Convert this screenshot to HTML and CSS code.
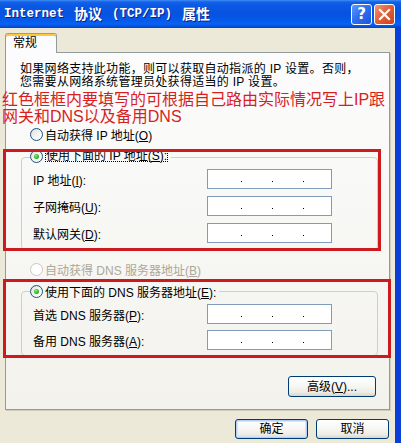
FILE: index.html
```html
<!DOCTYPE html>
<html lang="zh-CN">
<head>
<meta charset="utf-8">
<title>Internet 协议 (TCP/IP) 属性</title>
<link rel="stylesheet" href="styles.css">
</head>
<body>
<div class="window">
  <div class="titlebar">
    <div class="title">
      <span class="lat">Internet</span><span>协议</span><span class="lat">(TCP/IP)</span><span>属性</span>
    </div>
    <div class="tb-buttons">
      <div class="tb-btn help">?</div>
      <div class="tb-btn close">
        <svg width="13" height="13" viewBox="0 0 13 13"><path d="M2 2 L11 11 M11 2 L2 11" stroke="#fff" stroke-width="2.2" stroke-linecap="square" fill="none"/></svg>
      </div>
    </div>
  </div>
  <div class="client">
    <div class="tabs"><div class="tab">常规</div></div>
    <div class="panel">
      <p class="intro">如果网络支持此功能，则可以获取自动指派的 IP 设置。否则，<br>您需要从网络系统管理员处获得适当的 IP 设置。</p>
      <p class="note">红色框框内要填写的可根据自己路由实际情况写上IP跟<br>网关和DNS以及备用DNS</p>
      <div class="option"><span class="radio"></span><span>自动获得 IP 地址(<u>O</u>)</span></div>
      <div class="group g1">
        <div class="legend"><span class="radio on"></span><span class="focus">使用下面的 IP 地址(<u>S</u>):</span></div>
        <div class="fields">
          <div class="field"><span class="label">IP 地址(<u>I</u>):</span><span class="ip"><i></i><i></i><i></i></span></div>
          <div class="field"><span class="label">子网掩码(<u>U</u>):</span><span class="ip"><i></i><i></i><i></i></span></div>
          <div class="field"><span class="label">默认网关(<u>D</u>):</span><span class="ip"><i></i><i></i><i></i></span></div>
        </div>
      </div>
      <div class="option disabled"><span class="radio off"></span><span>自动获得 DNS 服务器地址(<u>B</u>)</span></div>
      <div class="group g2">
        <div class="legend"><span class="radio on"></span><span class="ltext">使用下面的 DNS 服务器地址(<u>E</u>):</span></div>
        <div class="fields">
          <div class="field"><span class="label">首选 DNS 服务器(<u>P</u>):</span><span class="ip"><i></i><i></i><i></i></span></div>
          <div class="field"><span class="label">备用 DNS 服务器(<u>A</u>):</span><span class="ip"><i></i><i></i><i></i></span></div>
        </div>
      </div>
      <div class="btn adv">高级(<u>V</u>)...</div>
    </div>
    <div class="footer">
      <div class="btn default">确定</div>
      <div class="btn">取消</div>
    </div>
  </div>
  <div class="mark m1"></div>
  <div class="mark m2"></div>
</div>
</body>
</html>
```
FILE: styles.css
```css
html, body {
  margin: 0;
  padding: 0;
}
body {
  width: 401px;
  height: 443px;
  overflow: hidden;
  font-family: "Liberation Sans", "Noto Sans CJK SC", sans-serif;
  font-size: 12px;
  color: #000;
}
p { margin: 0; }

.window {
  position: relative;
  width: 401px;
  height: 443px;
  display: flex;
  flex-direction: column;
  background: #ECE9D8;
}

/* title bar */
.titlebar {
  height: 28px;
  flex: none;
  box-sizing: border-box;
  display: flex;
  align-items: center;
  justify-content: space-between;
  padding: 0 6px 0 4px;
  background: linear-gradient(180deg, #3F8CF3 0, #1462E8 2px, #0A58E4 6px, #0553E0 14px, #0659EA 20px, #0762F2 24px, #0553DE 26px, #0441C9 28px);
}
.title {
  display: flex;
  gap: 10px;
  color: #fff;
  font-weight: bold;
  font-size: 14px;
  line-height: 16px;
  text-shadow: 1px 1px 0 #0A1E8A;
  white-space: nowrap;
}
.title .lat {
  font-family: "Liberation Mono", monospace;
  font-size: 12.5px;
}
.tb-buttons {
  display: flex;
  gap: 2px;
}
.tb-btn {
  width: 21px;
  height: 21px;
  box-sizing: border-box;
  border: 1px solid #fff;
  border-radius: 3px;
  display: flex;
  align-items: center;
  justify-content: center;
  color: #fff;
}
.help {
  background: linear-gradient(135deg, #5E9BFB 0%, #2E6FF0 45%, #1A55DB 100%);
  font-family: "DejaVu Sans", sans-serif;
  font-weight: bold;
  font-size: 15px;
  line-height: 19px;
}
.close {
  background: linear-gradient(135deg, #F09A7A 0%, #E2603A 45%, #C9431E 100%);
}

/* client area */
.client {
  flex: 1;
  border-right: 6px solid #0B3DD8;
  padding: 5px 6px 0 5px;
  display: flex;
  flex-direction: column;
}
.tabs {
  height: 19px;
  display: flex;
  position: relative;
  z-index: 1;
}
.tab {
  width: 52px;
  height: 20px;
  box-sizing: border-box;
  border: 1px solid #919B9C;
  border-top: 1px solid #E68B2C;
  border-bottom: none;
  border-radius: 3px 3px 0 0;
  box-shadow: inset 0 2px 0 #FFC73C;
  background: #FCFCFE;
  padding: 3px 0 0 7px;
  line-height: 13px;
}
.panel {
  width: 385px;
  height: 358px;
  box-sizing: border-box;
  border: 1px solid #919B9C;
  background: linear-gradient(180deg, #FCFCFD 0%, #F7F7F4 50%, #F3F2ED 100%);
  box-shadow: 1px 1px 0 #D0CDBE;
  display: flex;
  flex-direction: column;
}
.intro {
  margin: 10px 0 0 14px;
  line-height: 13px;
  letter-spacing: 0.3px;
  white-space: nowrap;
}
.note {
  margin: 3px 0 0 -4px;
  font-size: 16px;
  line-height: 16.5px;
  color: #D81E1E;
  white-space: nowrap;
}
.option {
  display: flex;
  align-items: center;
  height: 14px;
  margin: 2px 0 0 24px;
  white-space: nowrap;
}
.option .radio { margin-right: 2px; }
.option.disabled {
  margin-top: 12px;
  color: #ACA899;
}

.radio {
  position: relative;
  flex: none;
  width: 13px;
  height: 13px;
  box-sizing: border-box;
  border-radius: 50%;
  border: 1px solid #1C5180;
  background: linear-gradient(135deg, #DCDCD7 0%, #F3F3F0 50%, #FFFFFF 100%);
}
.radio.on::after {
  content: "";
  position: absolute;
  left: 3px;
  top: 3px;
  width: 5px;
  height: 5px;
  border-radius: 50%;
  background: radial-gradient(circle at 40% 35%, #7EEA79 0%, #2FB22B 60%, #1F8E1C 100%);
}
.radio.off {
  border-color: #CAC8BB;
  background: #FFFFFF;
}

.group {
  border: 1px solid #D0D0BF;
  border-radius: 4px;
  display: flex;
  flex-direction: column;
}
.g1 {
  margin: 16px 11px 0 15px;
  padding-bottom: 6px;
}
.g2 {
  margin: 15px 11px 0 15px;
  padding-bottom: 5px;
}
.legend {
  align-self: flex-start;
  display: flex;
  align-items: center;
  height: 14px;
  margin-left: 8px;
  padding-right: 3px;
  white-space: nowrap;
}
.g1 .legend {
  margin-top: -9px;
  background: #F9F9F7;
}
.g2 .legend {
  margin-top: -8px;
  background: #F6F6F3;
}
.legend .radio { margin-right: 2px; }
.focus {
  outline: 1px dotted #000;
  outline-offset: -1px;
  padding: 0 1px;
  line-height: 12px;
}
.fields {
  display: flex;
  flex-direction: column;
  margin-top: 6px;
  padding-left: 11px;
}
.g1 .fields { gap: 7px; }
.g2 .fields { gap: 6px; }
.field {
  display: flex;
  align-items: center;
  height: 20px;
}
.label {
  width: 174px;
  white-space: nowrap;
}
.ip {
  display: flex;
  gap: 30px;
  width: 125px;
  height: 20px;
  box-sizing: border-box;
  border: 1px solid #7F9DB9;
  background: #FFFFFF;
  padding-left: 33px;
}
.ip i {
  width: 1px;
  height: 1px;
  margin-top: 11px;
  background: #000;
}

/* buttons */
.btn {
  box-sizing: border-box;
  height: 20px;
  border: 1px solid #003C74;
  border-radius: 3px;
  background: linear-gradient(180deg, #FFFFFF 0%, #F7F7F4 45%, #EDECE6 80%, #D8D5C9 100%);
  display: flex;
  align-items: center;
  justify-content: center;
  line-height: 14px;
  white-space: nowrap;
}
.adv {
  align-self: flex-end;
  width: 88px;
  height: 21px;
  margin: 20px 13px 0 0;
}
.footer {
  display: flex;
  justify-content: flex-end;
  gap: 8px;
  margin-top: 9px;
}
.footer .btn {
  width: 73px;
}
.btn.default {
  box-shadow: inset 0 0 0 1px #B7CEF5, inset 0 0 0 2px #D6E3FA;
}

/* red annotation boxes */
.mark {
  position: absolute;
  z-index: 5;
  box-sizing: border-box;
  border: 3px solid #CC1A1E;
}
.m1 {
  left: 3px;
  top: 149px;
  width: 378px;
  height: 102px;
}
.m2 {
  left: 3px;
  top: 279px;
  width: 388px;
  height: 79px;
}
```
